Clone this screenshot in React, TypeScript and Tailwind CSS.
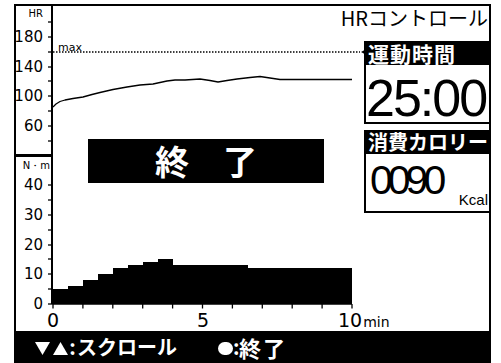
import React from "react";

const hrLabels = [
  { t: "180", y: 37 },
  { t: "140", y: 67 },
  { t: "100", y: 96 },
  { t: "60", y: 126 },
];
const tqLabels = [
  { t: "40", y: 185 },
  { t: "30", y: 215 },
  { t: "20", y: 245 },
  { t: "10", y: 274 },
  { t: "0", y: 304 },
];
const hrTicks = [22, 37, 52, 67, 81, 96, 111, 126, 141];
const tqTicks = [185, 200, 215, 230, 245, 259, 274, 289, 304];
const xTicks = Array.from({ length: 11 }, (_, i) => 53 + i * 29.9);

const hrLine =
  "53,107 56,104 60,101.5 65,100 73,98.5 83,97 92,94.5 100,92.5 113,89.5 127,87 140,85 153,84 160,82.5 167,81 175,80 185,80 200,79 210,80.5 218,82 227,80.5 237,79 250,77.5 260,76.5 270,78 280,79.5 300,79.5 320,79.5 352,79.5";
const bars =
  "53,304 53,289 68,289 68,286 83,286 83,280 98,280 98,274 113,274 113,268 128,268 128,265 143,265 143,262 158,262 158,259 173,259 173,265 248,265 248,268 352,268 352,304";

export default function App() {
  return (
    <div className="w-[501px] h-[363px] bg-white pl-[14px] pt-[4px] pr-[10px] flex flex-col overflow-hidden font-['Noto_Sans_CJK_JP',sans-serif] text-black">
      <div className="flex-1 flex flex-col border-l-2 border-t-2 border-r-2 border-black">
        <div className="flex flex-1 min-h-0">
          {/* chart section */}
          <div className="w-[348px] shrink-0 flex flex-col relative">
            <div className="flex h-[298px]">
              <div className="w-[37px] shrink-0 border-r-2 border-black flex flex-col font-['DejaVu_Sans',sans-serif]">
                <div className="h-[148px] relative">
                  <span className="absolute right-[8px] top-[7.5px] -translate-y-1/2 text-[10px] leading-none">HR</span>
                  {hrLabels.map((l) => (
                    <span
                      key={l.t}
                      className="absolute right-[8px] -translate-y-1/2 text-[15px] leading-none"
                      style={{ top: l.y - 6 }}
                    >
                      {l.t}
                    </span>
                  ))}
                </div>
                <div className="h-[3px] bg-black"></div>
                <div className="flex-1 relative">
                  <span className="absolute right-[1px] top-[9px] -translate-y-1/2 text-[10px] leading-none whitespace-nowrap">N・m</span>
                  {tqLabels.map((l) => (
                    <span
                      key={l.t}
                      className="absolute right-[8px] -translate-y-1/2 text-[15px] leading-none"
                      style={{ top: l.y - 157 }}
                    >
                      {l.t}
                    </span>
                  ))}
                </div>
              </div>
              <div className="flex-1 relative">
                <svg
                  className="absolute inset-0 overflow-visible"
                  width={311}
                  height={298}
                  viewBox="53 6 311 298"
                >
                  {hrTicks.map((y) => (
                    <line key={"h" + y} x1={48} x2={53} y1={y} y2={y} stroke="black" strokeWidth={1.3} />
                  ))}
                  {tqTicks.map((y) => (
                    <line key={"t" + y} x1={48} x2={53} y1={y} y2={y} stroke="black" strokeWidth={1.3} />
                  ))}
                  {xTicks.map((x) => (
                    <line key={"x" + x} x1={x} x2={x} y1={304} y2={308.5} stroke="black" strokeWidth={1.3} />
                  ))}
                  <line x1={53} x2={352} y1={304} y2={304} stroke="black" strokeWidth={1.3} />
                  <polygon points={bars} fill="black" />
                  <line x1={53} x2={360} y1={52} y2={52} stroke="black" strokeWidth={1.4} strokeDasharray="1.5 1.5" />
                  <polygon points="361,52 365.5,49.5 365.5,54.5" fill="black" />
                  <polyline points={hrLine} fill="none" stroke="black" strokeWidth={1.3} strokeLinejoin="round" />
                </svg>
                <span className="absolute left-[5px] top-[36px] text-[11px] leading-none font-['DejaVu_Sans',sans-serif]">max</span>
              </div>
            </div>
            <div className="flex-1 relative font-['DejaVu_Sans',sans-serif]">
              <span className="absolute left-[37px] top-[16px] -translate-x-1/2 -translate-y-1/2 text-[19px] leading-none">0</span>
              <span className="absolute left-[187px] top-[16px] -translate-x-1/2 -translate-y-1/2 text-[19px] leading-none">5</span>
              <span className="absolute left-[322px] top-[16px] -translate-y-1/2 flex items-baseline leading-none">
                <span className="text-[19px]">10</span>
                <span className="text-[14px] ml-[1px]">min</span>
              </span>
            </div>
            <div className="absolute left-[72px] top-[133px] w-[236px] h-[44px] bg-black flex items-center justify-center text-white font-bold text-[34px] leading-none">
              終　了
            </div>
          </div>
          {/* right panel */}
          <div className="flex-1 min-w-0 flex flex-col">
            <div className="h-[35px] pt-[2px] flex justify-end text-[20px] leading-none pr-[1px] whitespace-nowrap">HRコントロール</div>
            <div className="border-l-2 border-b-2 border-black flex flex-col">
              <div className="h-[24px] bg-black text-white font-bold text-[21px] tracking-[1px] leading-none flex items-center -ml-[2px] pl-[4px] whitespace-nowrap">
                運動時間
              </div>
              <div className="h-[57px] pt-[7px] font-['Liberation_Sans',sans-serif] text-[52px] leading-none tracking-[-2px] whitespace-nowrap">
                25:00
              </div>
            </div>
            <div className="h-[6px]"></div>
            <div className="border-l-2 border-b-2 border-black flex flex-col">
              <div className="h-[24px] bg-black text-white font-bold text-[20px] leading-none flex items-center -ml-[2px] pl-[4px] whitespace-nowrap">
                消費カロリー
              </div>
              <div className="h-[57px] flex justify-between items-end pl-[4px] pr-[1px] font-['Liberation_Sans',sans-serif]">
                <span className="self-start pt-[6px] text-[41px] leading-none tracking-[-5px]">0090</span>
                <span className="mb-[4px] text-[15px] leading-none">Kcal</span>
              </div>
            </div>
          </div>
        </div>
        <div className="h-[32px] bg-black flex items-center pl-[19px] text-white font-bold text-[20px] leading-none whitespace-nowrap">
          <svg width={15} height={13} className="mt-[3px]">
            <polygon points="0,0 15,0 7.5,13" fill="white" />
          </svg>
          <svg width={15} height={13} className="ml-[3px] mt-[3px]">
            <polygon points="0,13 15,13 7.5,0" fill="white" />
          </svg>
          <span className="w-[9px] text-center">:</span>
          <span>スクロール</span>
          <span className="ml-[41px] w-[15px] h-[13px] rounded-full bg-white mt-[3px]"></span>
          <span className="w-[6px] text-center">:</span>
          <span className="text-[22px] tracking-[2px]">終了</span>
        </div>
      </div>
    </div>
  );
}
